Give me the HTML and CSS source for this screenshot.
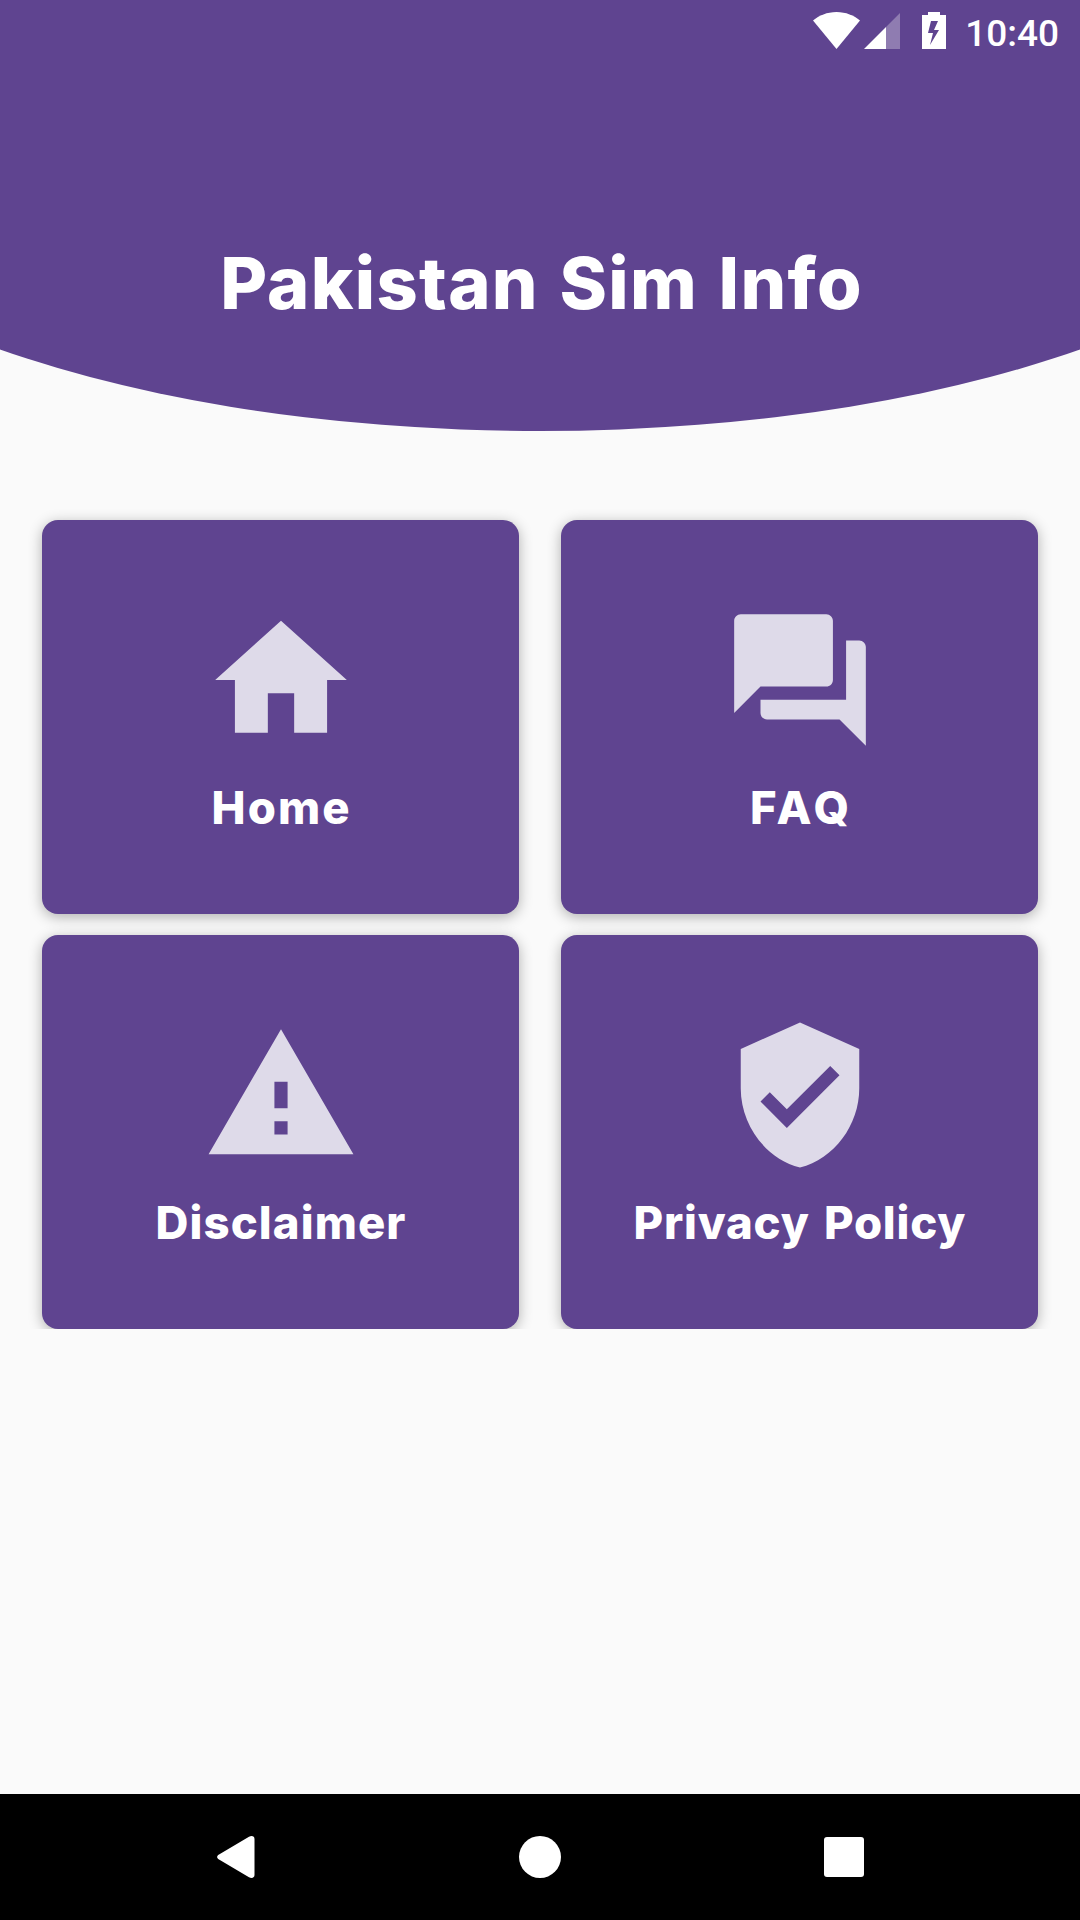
FILE: index.html
```html
<!DOCTYPE html>
<html lang="en">
<head>
    <meta charset="UTF-8">
    <meta name="viewport" content="width=device-width, initial-scale=1.0">
    <title>Pakistan Sim Info</title>
    <link rel="stylesheet" href="styles.css">
</head>
<body>
    <header class="header">
        <!-- Status bar -->
        <div class="status-bar">
            <svg class="wifi" viewBox="0 0 47 37"><path d="M23.5 37 0 8.5C6 3.5 14 0 23.5 0S41 3.5 47 8.5z"/></svg>
            <svg class="signal" viewBox="0 0 36 36"><path opacity=".3" d="M36 0v36H22V14z"/><path d="M0 36 22 14v22z"/></svg>
            <svg class="battery" viewBox="0 0 24 37"><path fill-rule="evenodd" d="M6 0h12v3h6v34H0V3h6zM9 9 6 21h5L8 33l9-15h-5l4-9z"/></svg>
            <span class="time">10:40</span>
        </div>
        <h1>Pakistan Sim Info</h1>
    </header>

    <!-- Menu -->
    <main class="menu">
        <a class="card">
            <svg viewBox="0 0 24 24"><path d="M10 20v-6h4v6h5v-8h3L12 3 2 12h3v8z"/></svg>
            <span class="home">Home</span>
        </a>
        <a class="card">
            <svg viewBox="0 0 24 24"><path d="M21 6h-2v9H6v2c0 .55.45 1 1 1h11l4 4V7c0-.55-.45-1-1-1zm-4 6V3c0-.55-.45-1-1-1H3c-.55 0-1 .45-1 1v14l4-4h10c.55 0 1-.45 1-1z"/></svg>
            <span class="faq">FAQ</span>
        </a>
        <a class="card">
            <svg viewBox="0 0 24 24"><path d="M1 21h22L12 2 1 21zm12-3h-2v-2h2v2zm0-4h-2v-4h2v4z"/></svg>
            <span class="disclaimer">Disclaimer</span>
        </a>
        <a class="card">
            <svg viewBox="0 0 24 24"><path d="M12 1L3 5v6c0 5.55 3.84 10.74 9 12 5.16-1.26 9-6.45 9-12V5l-9-4zm-2 16l-4-4 1.41-1.41L10 14.17l6.59-6.59L18 9l-8 8z"/></svg>
            <span class="privacy">Privacy Policy</span>
        </a>
    </main>

    <!-- Navigation bar -->
    <nav class="nav-bar">
        <svg class="back" viewBox="0 0 39 42"><path d="M2 18.5 32 .8C35-.8 37.5.5 37.5 3v36c0 2.5-2.5 3.8-5.5 2.2L2 23.5C-.5 22-.5 20 2 18.5z"/></svg>
        <div class="circle"></div>
        <div class="square"></div>
    </nav>
</body>
</html>
```
FILE: styles.css
```css
* {
    box-sizing: border-box;
}
body {
    font-family: Inter, sans-serif;
    margin: 0;
    height: 1920px;
    display: flex;
    flex-direction: column;
    background-color: #fafafa;
    color: #fff;
}
svg {
    display: block;
    fill: #fff;
}
.header {
    height: 431px;
    background-color: #5f4490;
    clip-path: ellipse(810px 320px at 50% 111px);
}
.status-bar {
    height: 63px;
    padding: 12px 21px 0 0;
    display: flex;
    justify-content: flex-end;
}
.wifi {
    width: 47px;
    height: 37px;
    margin-right: 4px;
}
.signal {
    width: 36px;
    height: 36px;
    margin: 1px 22px 0 0;
}
.battery {
    width: 24px;
    height: 37px;
    margin-right: 19px;
}
.time {
    font-family: Roboto, sans-serif;
    font-size: 37px;
    font-weight: 500;
    line-height: 43px;
}
h1 {
    margin: 175px 0 0;
    padding-left: 3px;
    font-size: 72px;
    line-height: 90px;
    font-weight: 800;
    letter-spacing: 1.3px;
    word-spacing: 3.5px;
    text-align: center;
    white-space: nowrap;
}
.menu {
    display: grid;
    grid-template-columns: 477px 477px;
    grid-auto-rows: 394px;
    gap: 21px 42px;
    justify-content: center;
    margin-top: 69px;
    padding-top: 20px;
    overflow: hidden;
}
.card {
    display: flex;
    flex-direction: column;
    align-items: center;
    padding-top: 81px;
    background-color: #5f4490;
    border-radius: 16px;
    box-shadow: 0 3px 14px rgba(0,0,0,0.3);
}
.card svg {
    width: 158px;
    height: 158px;
    fill: #dedae9;
}
.card span {
    margin-top: 21px;
    font-size: 45.5px;
    line-height: 56px;
    font-weight: 800;
    white-space: nowrap;
}
.card .home {
    letter-spacing: 2.1px;
    margin-right: -2.1px;
}
.card .faq {
    letter-spacing: 4px;
    margin-right: -4px;
}
.card .disclaimer {
    letter-spacing: 1.1px;
    margin-right: -1.1px;
}
.card .privacy {
    letter-spacing: 0.8px;
    word-spacing: 3.5px;
    margin-right: -0.8px;
}
.nav-bar {
    height: 126px;
    margin-top: auto;
    padding: 0 216px 0 217px;
    display: flex;
    align-items: center;
    justify-content: space-between;
    background-color: #000;
}
.back {
    width: 39px;
    height: 42px;
}
.circle {
    width: 42px;
    height: 42px;
    border-radius: 50%;
    background-color: #fff;
}
.square {
    width: 40px;
    height: 40px;
    border-radius: 3px;
    background-color: #fff;
}
```
